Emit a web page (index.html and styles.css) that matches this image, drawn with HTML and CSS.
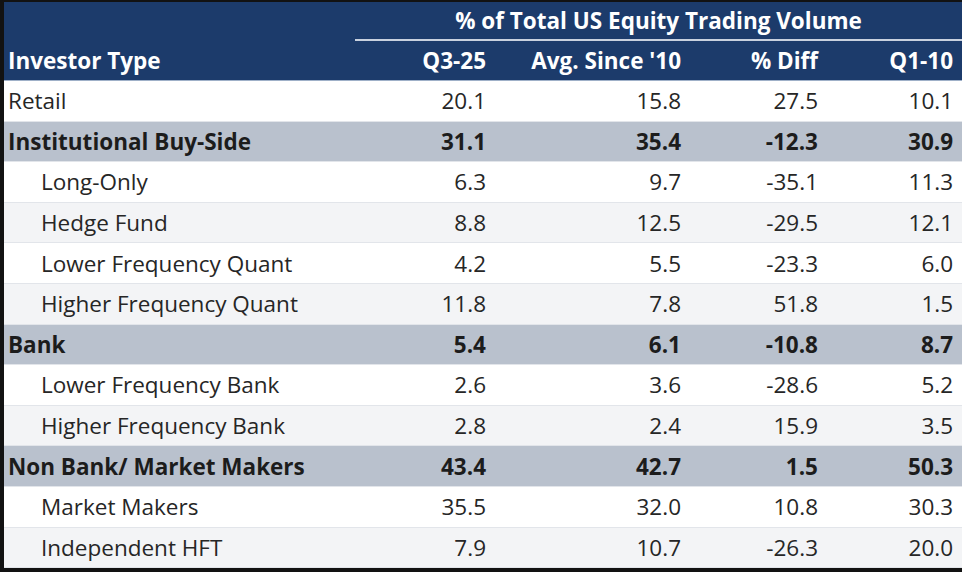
FILE: index.html
```html
<!DOCTYPE html>
<html>
<head>
<meta charset="utf-8">
<link rel="stylesheet" href="styles.css">
</head>
<body>
<div class="frame">
<table class="vol">
  <colgroup>
    <col class="c-label"><col class="c-q3"><col class="c-avg"><col class="c-diff"><col class="c-q1">
  </colgroup>
  <thead>
    <tr class="h1">
      <th></th>
      <th colspan="4" class="span"><span>% of Total US Equity Trading Volume</span></th>
    </tr>
    <tr class="h2">
      <th class="lab">Investor Type</th>
      <th>Q3-25</th>
      <th>Avg. Since '10</th>
      <th>% Diff</th>
      <th>Q1-10</th>
    </tr>
  </thead>
  <tbody>
    <tr class="plain"><td class="lab">Retail</td><td>20.1</td><td>15.8</td><td>27.5</td><td>10.1</td></tr>
    <tr class="group"><td class="lab">Institutional Buy-Side</td><td>31.1</td><td>35.4</td><td>-12.3</td><td>30.9</td></tr>
    <tr class="plain"><td class="lab sub">Long-Only</td><td>6.3</td><td>9.7</td><td>-35.1</td><td>11.3</td></tr>
    <tr class="alt"><td class="lab sub">Hedge Fund</td><td>8.8</td><td>12.5</td><td>-29.5</td><td>12.1</td></tr>
    <tr class="plain"><td class="lab sub">Lower Frequency Quant</td><td>4.2</td><td>5.5</td><td>-23.3</td><td>6.0</td></tr>
    <tr class="alt"><td class="lab sub">Higher Frequency Quant</td><td>11.8</td><td>7.8</td><td>51.8</td><td>1.5</td></tr>
    <tr class="group"><td class="lab">Bank</td><td>5.4</td><td>6.1</td><td>-10.8</td><td>8.7</td></tr>
    <tr class="plain"><td class="lab sub">Lower Frequency Bank</td><td>2.6</td><td>3.6</td><td>-28.6</td><td>5.2</td></tr>
    <tr class="alt"><td class="lab sub">Higher Frequency Bank</td><td>2.8</td><td>2.4</td><td>15.9</td><td>3.5</td></tr>
    <tr class="group"><td class="lab">Non Bank/ Market Makers</td><td>43.4</td><td>42.7</td><td>1.5</td><td>50.3</td></tr>
    <tr class="plain"><td class="lab sub">Market Makers</td><td>35.5</td><td>32.0</td><td>10.8</td><td>30.3</td></tr>
    <tr class="alt"><td class="lab sub">Independent HFT</td><td>7.9</td><td>10.7</td><td>-26.3</td><td>20.0</td></tr>
  </tbody>
</table>
</div>
</body>
</html>
```

FILE: styles.css
```css
html, body {
  margin: 0;
  padding: 0;
  background: #121212;
}
.frame {
  padding: 2px 0 0 4px;
  width: 958px;
  height: 570px;
  overflow: hidden;
}
.vol {
  width: 958px;
  border-collapse: collapse;
  table-layout: fixed;
  font-family: "Open Sans", "Noto Sans", sans-serif;
  font-size: 22.5px;
  color: #262626;
}
.c-label { width: 351px; }
.c-q3 { width: 140px; }
.c-avg { width: 195px; }
.c-diff { width: 137px; }
.c-q1 { width: 135px; }

.vol th, .vol td {
  padding: 0 9px 0 4px;
  text-align: right;
  white-space: nowrap;
  line-height: 1.2;
}
.vol thead th {
  background: #1c3b6b;
  color: #ffffff;
  font-weight: 700;
}
.h1 th {
  height: 37px;
  vertical-align: middle;
}
.h1 .span {
  padding: 0;
  text-align: center;
  border-bottom: 2px solid #c9d1df;
}
.h2 th {
  height: 39px;
  border-bottom: 1px solid #9fb0c8;
}
.vol .lab {
  text-align: left;
}
.vol .sub {
  padding-left: 37px;
}
.vol tbody tr {
  height: 40.6px;
}
.vol tbody td {
  border-bottom: 1px solid #e2e5ea;
  padding-top: 0;
}
.plain td { background: #ffffff; }
.alt td { background: #f3f4f6; }
.group td {
  background: #b9c1cd;
  font-weight: 700;
  color: #1c1c1c;
}
```
